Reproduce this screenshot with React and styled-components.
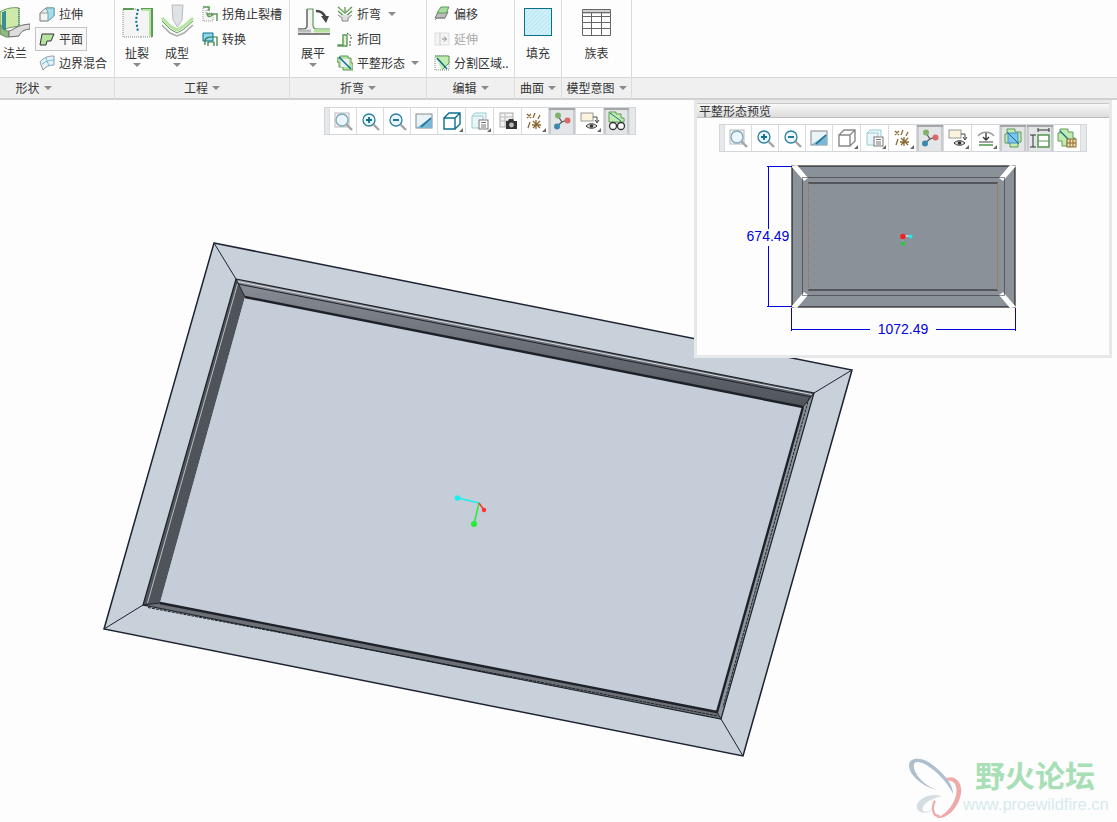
import React from "react";
import styled, { createGlobalStyle } from "styled-components";

const Global = createGlobalStyle`
  html, body { margin: 0; padding: 0; background: #fdfdfd; }
  body { font-family: "Noto Sans CJK SC", "Liberation Sans", sans-serif; font-size: 12px; color: #333; }
  #root { width: 1117px; height: 822px; overflow: hidden; }
`;

const Page = styled.div`
  width: 1117px; height: 822px; display: flex; flex-direction: column; overflow: hidden;
`;
const Ribbon = styled.header`display: flex; height: 100px; flex: none; background: #fdfdfd;`;
const Group = styled.section`
  display: flex; flex-direction: column; flex: ${p => (p.$w ? `0 0 ${p.$w}px` : "1 1 0")}; min-width: 0;
  border-right: ${p => (p.$w ? "1px solid #dcdcdc" : "0")}; box-sizing: border-box;
`;
const GroupBody = styled.div`
  height: 77px; display: flex; align-items: flex-start; padding-left: ${p => p.$pad || 0}px; box-sizing: border-box;
`;
const GroupFooter = styled.div`
  height: 23px; box-sizing: border-box; display: flex; align-items: center; justify-content: center; gap: 4px;
  padding-right: ${p => p.$pr || 0}px;
  background: #f0f0f0; border-top: 1px solid #d6d6d6; border-bottom: 2px solid #d0d0d0; line-height: 18px; color: #333;
`;
const Caret = styled.i`
  display: inline-block; width: 0; height: 0; flex: none;
  border-left: 4px solid transparent; border-right: 4px solid transparent; border-top: 4px solid #8a8a8a;
`;
const LargeButton = styled.button`
  appearance: none; border: 0; background: none; padding: 0; font: inherit; color: inherit; flex: none;
  width: ${p => p.$w}px; height: 77px; display: flex; flex-direction: column; align-items: center;
`;
const LargeIcon = styled.span`height: 44px; display: block; line-height: 0;`;
const LargeLabel = styled.span`height: 18px; line-height: 18px; white-space: nowrap;`;
const LargeCaret = styled(Caret)`margin-top: 1px;`;
const SmallColumn = styled.div`
  display: flex; flex-direction: column; padding-top: 2px; margin-left: ${p => p.$ml || 0}px;
`;
const SmallButton = styled.button`
  appearance: none; background: ${p => (p.$on ? "#f8f8f8" : "none")}; font: inherit;
  color: ${p => (p.$off ? "#a8a8a8" : "#333")};
  border: 1px solid ${p => (p.$on ? "#c4c4c4" : "transparent")};
  height: 24.5px; box-sizing: border-box; padding: 0 3px; display: flex; align-items: center; gap: 4px; white-space: nowrap;
  align-self: flex-start; line-height: 16px;
`;
const SmallCaret = styled(Caret)`margin-left: ${p => p.$ml}px;`;

const Canvas = styled.main`position: relative; flex: 1; background: #fdfdfd;`;
const ModelSvg = styled.svg`display: block; width: 1117px; height: 722px;`;
const ViewToolbar = styled.div`
  display: flex; height: 28px; box-sizing: border-box; background: #e6e8ea; border: 1px solid #d2d6da; padding: 0 5px 0 4px; gap: 0;
`;
const FloatingToolbar = styled(ViewToolbar)`position: absolute; left: 324px; top: 7px;`;
const ToolButton = styled.button`
  appearance: none; padding: 0; width: ${p => p.$w || 27}px; box-sizing: border-box; display: flex; align-items: center; justify-content: center;
  border: 0; border-left: 1px solid #d8dcdf;
  background: ${p => (p.$on ? "#e3e5e7" : "#fff")};
  box-shadow: ${p => (p.$on ? "inset 0 2px 0 #a4a6a8, inset 2px 0 0 #c8cacc, inset -2px 0 0 #c8cacc" : "none")};
  position: relative;
  &:last-child { border-right: 1px solid #d8dcdf; }
`;
const Corner = styled.i`
  position: absolute; right: 2px; bottom: 2px; width: 0; height: 0;
  border-left: 4px solid transparent; border-bottom: 4px solid #666;
`;
const Panel = styled.aside`
  position: absolute; left: 694px; top: 0; width: 418px; height: 258px; box-sizing: border-box;
  background: #e6e8ea; padding: 3px; display: flex; flex-direction: column;
`;
const PanelTitle = styled.h2`
  margin: 0; height: 15px; box-sizing: border-box; padding-left: 2px; font-weight: 400; font-size: 12px; line-height: 14px; color: #333;
  background: linear-gradient(#f8f8f8, #dcdcdc); border: 1px solid #c8c8c8; border-bottom-color: #bcbcbc; border-left: 0; border-right: 0;
`;
const PanelBody = styled.div`
  flex: 1; background: #fdfdfd; display: flex; flex-direction: column; align-items: center; padding-top: 6px;
`;
const PreviewSvg = styled.svg`display: block; width: 412px; height: 200px; margin-top: 3px; flex: none;`;
const Watermark = styled.div`
  position: absolute; left: 905px; top: 652px; width: 212px; height: 68px; display: flex; gap: 4px;
`;
const WatermarkText = styled.div`display: flex; flex-direction: column; align-items: flex-start; margin-left: -6px; padding-top: 6px;`;
const WatermarkTitle = styled.div`
  font: 700 30px/32px "Noto Sans CJK SC", sans-serif; color: #a8dfb6; padding-left: 12px; white-space: nowrap;
`;
const WatermarkUrl = styled.div`
  font: 16.500px/20px "Liberation Sans", sans-serif; color: #d6eaee; white-space: nowrap; margin-top: 4px;
`;

const G1 = "#b6e3a0", GD = "#5c9a58", T = "#0b6f8e";

const S = ({ children, w = 16, h = 16, vb }) => (
  <svg width={w} height={h} viewBox={vb || `0 0 ${w} ${h}`} style={{ display: "block", flex: "none" }}>{children}</svg>
);

/* ribbon icons — large ones use a 44px tall slot */
const FlangeIcon = () => (
  <S w={30} h={44}>
    <path d="M0 12 C6 8 14 7 19 8 L19 26 L8 28 L0 32Z" fill="#cfeaa8" stroke="#6a9a58" />
    <path d="M3 12V31 M5 11 V30" stroke="#0b6f8e" strokeWidth="1.5" />
    <path d="M19 8V26" stroke={T} strokeWidth="1" strokeDasharray="1 1" />
    <path d="M0 25 L0 34 L6 37 L9 37 L9 31 C4 31 2 29 1 25Z" fill="#8cb884" stroke="#6a8a60" />
    <path d="M9 31 C14 30 16 25 30 24 L30 29 C20 30 20 35 19 36 L9 37Z" fill="#ddd" stroke="#666" />
  </S>
);
const RipIcon = () => (
  <S w={40} h={44}>
    <rect x="6" y="9" width="29" height="28" fill="#f4f4f4" />
    <path d="M6 37V9H20 M24 37H6 M24 37H35" stroke="#888" strokeDasharray="1 1" fill="none" />
    <path d="M6 9H17M24 9H35V37" stroke={GD} strokeWidth="2" fill="none" />
    <path d="M25 10H33V36" stroke={G1} strokeWidth="2" fill="none" />
    <path d="M21 9 L19 20 L21 32" stroke={T} strokeWidth="2" strokeDasharray="2 2" fill="none" />
  </S>
);
const FormIcon = () => (
  <S w={40} h={44}>
    <path d="M15 5H26L25 20 L20.5 27 L16 20Z" fill="#dfe3e6" stroke="#b8bcc0" />
    <path d="M5 18L13 26 L20 30 L27 26 L36 18" fill="none" stroke={G1} strokeWidth="3" />
    <path d="M5 21L13 29 L20 33 L27 29 L36 21" fill="none" stroke={GD} strokeWidth="1" />
    <path d="M5 25L13 33 L20 36 L27 33 L36 25" fill="none" stroke="#aaa" strokeWidth="1.5" />
  </S>
);
const UnbendIcon = () => (
  <S w={40} h={44}>
    <path d="M14 9H20V25 C20 28 22 29 24 29H36V34H4V29H12 C13 29 14 28 14 26Z" fill="#f2f2f2" />
    <path d="M14 9V26 C14 29 12 29 5 29" fill="none" stroke="#666" strokeWidth="1.5" />
    <path d="M14 9H20 V25 C20 28 22 29 24 29H37" fill="none" stroke={GD} strokeWidth="1.2" />
    <path d="M5 34H37" stroke="#555" strokeWidth="1.5" />
    <path d="M5 31H18 " stroke="#bbb" strokeWidth="3" />
    <path d="M21 31H37" stroke={G1} strokeWidth="3" />
    <path d="M23 11 C28 11 31 14 32 17" fill="none" stroke="#444" strokeWidth="2.5" />
    <path d="M28 16L36 16 L33 23Z" fill="#444" />
  </S>
);
const FillIcon = () => (
  <S w={47} h={44}>
    <defs>
      <pattern id="hatch" width="3" height="3" patternUnits="userSpaceOnUse" patternTransform="rotate(45)">
        <rect width="3" height="3" fill="#bdeaf6" /><path d="M0 0V3" stroke="#fff" />
      </pattern>
    </defs>
    <rect x="9.5" y="8.5" width="27" height="27" fill="url(#hatch)" stroke={T} />
  </S>
);
const TableIcon = () => (
  <S w={69} h={44}>
    <path d="M20.5 9.5H48.5V35.5H20.5Z M20.5 12.5H48.5 M20.5 16.5H48.5 M20.5 22.5H48.5 M20.5 28.5H48.5 M29.5 12.5V35.5 M39.5 12.5V35.5" fill="#fff" stroke="#666" />
    <path d="M20 10H49V14H20Z" fill="#777" opacity=".35" />
  </S>
);
const ExtrudeIcon = () => (
  <S><path d="M1 7L7 2H15V10L9 15H1Z" fill="#f4f4f4" stroke="#777" /><path d="M7 2H15V10L9 15V7Z" fill="#a8dcec" stroke="#6aa" /><path d="M1 7H9" stroke="#999" /></S>
);
const PlanarIcon = () => (
  <S><path d="M3 3H15L12 10H8L7 14H1Z" fill={G1} stroke="#333" /></S>
);
const BlendIcon = () => (
  <S><path d="M1 7C5 2 10 1 15 1 L15 10 C10 10 6 12 4 15Z" fill="#e8f2f6" stroke="#8a9aa6" /><path d="M7 3L10 11M3 9C7 6 11 5 15 5" stroke="#6cc0e0" fill="none" /></S>
);
const ReliefIcon = () => (
  <S><path d="M1 1H7V4H4V7H11V15H1Z" fill="#f4f4f4" stroke="#999" strokeDasharray="1 1" /><path d="M1 1H7V5 M5 8H11 C10 10 8 11 6 10Z M11 8H15V15" stroke={GD} strokeWidth="1.5" fill="none" /></S>
);
const ConvertIcon = () => (
  <S><path d="M1 2H11V10H1Z" fill="#8fd8f0" stroke={T} /><path d="M3 14V10 C3 7 6 6 9 6H15V15M6 15V11H12V15" stroke="#2f7a3a" strokeWidth="1.2" fill="none" /></S>
);
const BendIcon = () => (
  <S><path d="M1 1L8 7L15 1M1 5L8 11L15 5" stroke={GD} fill="none" strokeWidth="1.4" /><path d="M3 2L8 6 L13 2" stroke={G1} fill="none" /><path d="M1 9L5 12V15H11V12L15 9" fill="#ddd" stroke="#888" /><path d="M8 1V6" stroke="#aaa" strokeWidth="2" /></S>
);
const BendBackIcon = () => (
  <S><path d="M1 14H6V4H10V15H1Z" fill="#dff0c8" stroke={GD} strokeWidth="1.4" /><path d="M10 2L14 5V8M13 10V15" stroke="#444" fill="none" strokeDasharray="2 1" /></S>
);
const FlatIcon = () => (
  <S><path d="M3 1H11V3H14V8H16V15H6V12H2V7H0V3H3Z" fill={G1} stroke={GD} /><rect x="4" y="4" width="8" height="8" fill="#eef" /><path d="M2 2L14 14" stroke={T} strokeWidth="1.5" /></S>
);
const OffsetIcon = () => (
  <S><path d="M1 12L4 6H14L11 12Z" fill="#bbb" stroke="#777" /><path d="M3 7L7 1H15L12 7Z" fill="#a8dca0" stroke={GD} /><path d="M1 14L3 12H11" stroke="#888" fill="none" /></S>
);
const ExtendIcon = () => (
  <S><rect x="1" y="2" width="14" height="12" fill="#f4f4f4" stroke="#ddd" /><path d="M8 8H12M10 5.5L12.5 8L10 10.5" stroke="#888" fill="none" /><path d="M6 2V14" stroke="#ccc" /></S>
);
const SplitIcon = () => (
  <S><rect x="1" y="1" width="14" height="14" fill="#fafafa" stroke="#888" strokeDasharray="1 1" /><path d="M1 1H15V8L8 15" fill="#c4ecb0" stroke={GD} /><path d="M3 3L13 14" stroke={T} strokeWidth="1.5" /></S>
);

/* view toolbar icons */
const Lens = ({ sign, c = "#2a7fa0" }) => (
  <>
    <circle cx="9" cy="9" r="6" fill="#eaf6fb" stroke={c} strokeWidth="1.3" />
    <path d="M13.500 13.500L19 19" stroke="#a4a4a4" strokeWidth="2.400" />
    {sign && <path d={sign === "+" ? "M6 9H12M9 6V12" : "M6 9H12"} stroke="#0b6f8e" strokeWidth="1.8" />}
  </>
);
const T1 = ({ children }) => <S w={20} h={20}>{children}</S>;
const Refit = () => <T1><rect x="2" y="2" width="14" height="14" fill="#f2f2f2" stroke="#bbb" /><Lens c="#7aa8bc" /></T1>;
const ZoomIn = () => <T1><Lens sign="+" /></T1>;
const ZoomOut = () => <T1><Lens sign="-" /></T1>;
const Repaint = () => <T1><rect x="2" y="3" width="16" height="14" fill="#e8f4f8" stroke="#888" /><path d="M2 17 L18 6V17Z" fill="#7ab8d4" /><path d="M7 16L17 7" stroke="#1a6f94" strokeWidth="1.6" /></T1>;
const Cube = ({ c = T }) => <T1><path d="M2 7H13V18H2Z M2 7L7 2H18V13L13 18 M13 7L18 2" fill="#fff" stroke={c} strokeWidth="1.4" /></T1>;
const Saved = () => <T1><path d="M2 5H13V17H2Z M2 5L5 2H16V8" fill="#eaf5fa" stroke="#9cc" /><rect x="9" y="9" width="9" height="9" fill="#fff" stroke="#777" /><path d="M11 11.500H16M11 14H16M11 16H16" stroke="#777" /></T1>;
const Camera = () => <T1><rect x="2" y="2" width="13" height="14" fill="#f2f2f2" stroke="#aaa" /><path d="M2 6H15M2 10H15M7 2V16" stroke="#bbb" /><path d="M8 10H10L11 8H15L16 10H19V18H8Z" fill="#333" /><circle cx="13.500" cy="14" r="2.400" fill="#bbb" /></T1>;
const Datum = () => <T1><path d="M2 3L6 7M6 3L2 7M10 2L8 7M5 11L3 17M11 9V18M7 14H16M8 10L15 17M15 10L8 17M15 4L13 8" stroke="#8a6a30" strokeWidth="1.3" /></T1>;
const Csys = () => <T1><path d="M6 5L10 11L15 9M10 11L5 15" stroke="#555" strokeWidth="1.2" fill="none" /><circle cx="6" cy="4.500" r="3" fill="#7fb26a" /><circle cx="15.500" cy="9.500" r="3" fill="#d86a6a" /><circle cx="5" cy="15.500" r="3" fill="#3a8ab0" /></T1>;
const Display = () => <T1><rect x="1" y="2" width="12" height="8" fill="#fbf3dc" stroke="#999" /><path d="M13 6H17V11M15 9L17 12 19 9" stroke="#444" fill="none" /><path d="M6 15C9 12 14 12 17 15 C14 18 9 18 6 15Z" fill="#ddd" stroke="#333" /><circle cx="11.500" cy="15" r="1.800" fill="#333" /></T1>;
const Glasses = () => <T1><path d="M2 1H9V3H14V7H17V11H2Z" fill="#c4ecb0" stroke={GD} /><path d="M3 2L14 10" stroke={T} /><circle cx="6" cy="15" r="3.500" fill="#fff" stroke="#333" strokeWidth="1.3" /><circle cx="14" cy="15" r="3.500" fill="#fff" stroke="#333" strokeWidth="1.3" /><path d="M9.500 14.500H10.500" stroke="#333" /></T1>;
const FlatMode = () => <T1><path d="M2 8 C6 3 14 3 18 8" stroke="#999" fill="none" strokeWidth="1.3" /><path d="M10 5V11M7 9L10 12 13 9" stroke="#333" fill="none" strokeWidth="1.3" /><path d="M3 14H17" stroke="#777" strokeWidth="1.4" /><path d="M3 17H17" stroke={GD} strokeWidth="1.6" /></T1>;
const BlueFlat = () => <T1><path d="M4 1H12V4H18V14H15V19H7V15H2V6H4Z" fill="#c4ecb0" stroke={GD} /><rect x="5" y="5" width="10" height="10" fill="#7cc4ee" stroke="#4a90c0" /><path d="M4 4L16 16" stroke={T} /></T1>;
const DimMode = () => <T1><path d="M8 2H19M8 0V4M19 0V4" stroke="#333" /><path d="M0 7H6M0 19H6M3 7V19" stroke="#333" /><rect x="8" y="7" width="11" height="12" fill="#fff" stroke={GD} strokeWidth="1.6" /><path d="M8 13H19" stroke={GD} /></T1>;
const FlatTable = () => <T1><path d="M3 1H11V4H16V10H18V12H10V18H5V13H1V5H3Z" fill="#c4ecb0" stroke={GD} /><path d="M3 3L11 11" stroke={T} strokeWidth="1.2" /><rect x="10" y="11" width="9" height="8" fill="#f0dcb0" stroke="#8a6a30" /><path d="M10 15H19M13 11V19M16 11V19" stroke="#8a6a30" /></T1>;

const Tool = ({ w, on, corner, children }) => (
  <ToolButton $w={w} $on={on}>{children}{corner && <Corner />}</ToolButton>
);

const LARGE = (Icon, label, w, caret) => (
  <LargeButton $w={w}>
    <LargeIcon><Icon /></LargeIcon>
    <LargeLabel>{label}</LargeLabel>
    {caret && <LargeCaret />}
  </LargeButton>
);
const Small = ({ icon: Icon, children, on, off, caret }) => (
  <SmallButton $on={on} $off={off}><Icon />{children}{caret && <SmallCaret $ml={caret} />}</SmallButton>
);
const Footer = ({ children, pr }) => <GroupFooter $pr={pr}><span>{children}</span><Caret /></GroupFooter>;

const Model = () => (
  <ModelSvg viewBox="0 100 1117 722">
    <defs>
      <linearGradient id="wallTop" x1="0.52" y1="0" x2="0.48" y2="1">
        <stop offset="0" stopColor="#8a9097" /><stop offset="1" stopColor="#4e535a" />
      </linearGradient>
    </defs>
    <polygon points="214,243 852,370 743,756 104,629" fill="#c8d0da" stroke="#1c2230" strokeWidth="1.5" />
    <g stroke="#1c2230" strokeWidth="1" fill="none">
      <path d="M214 243L236 279M852 370L814 393M743 756L721 719M104 629L143 605" />
    </g>
    <polygon points="236,279 814,393 803,407 245,297" fill="url(#wallTop)" />
    <polygon points="236,279 245,297 160,603 143,605" fill="#4f545a" />
    <polygon points="143,605 160,603 717,712 721,719" fill="#6c7178" />
    <polygon points="717,712 803,407 814,393 721,719" fill="#8d939b" />
    <polygon points="245,297 803,407 717,712 160,603" fill="#c5cdd9" />
    <path d="M245 297L803 407M803 407L717 712L160 603" fill="none" stroke="#1e2228" strokeWidth="2.400" />
    <path d="M236 279L814 393L721 719L143 605Z" fill="none" stroke="#1e2228" strokeWidth="1.200" />
    <path d="M238 281.500L812 394.500" fill="none" stroke="#d8dce2" strokeWidth="1" />
    <path d="M238 284L811 397" fill="none" stroke="#1e2228" strokeWidth="1" />
    <path d="M237.500 284L147.500 603" fill="none" stroke="#b8bec6" strokeWidth="1" />
    <path d="M148 607.500L718 716M809 398L723 707" fill="none" stroke="#1e2228" strokeWidth="1" strokeDasharray="3 1" />
    <path d="M236 279L245 297M814 393L803 407M143 605L160 603M721 719L717 712" stroke="#1e2228" strokeWidth="1" />
    <g strokeWidth="1.500" fill="none">
      <path d="M479 503L458 498" stroke="#18f0f0" />
      <path d="M479 503L474 524" stroke="#22ee33" />
      <path d="M479 503L484 510" stroke="#ff3333" />
    </g>
    <circle cx="457.500" cy="498" r="2.800" fill="#18f0f0" />
    <circle cx="474" cy="524" r="3" fill="#22ee33" />
    <circle cx="484" cy="510" r="2.200" fill="#ff3333" />
  </ModelSvg>
);

const Preview = () => (
  <PreviewSvg viewBox="697 155 412 200">
    <rect x="792" y="166" width="223" height="141" fill="#8a9199" stroke="#222" strokeWidth="1.200" />
    <path d="M791 166L797 165L808 178L804 181Z M1016 166L1010 165L999 178L1003 181Z M791 307L797 308L808 295L804 292Z M1016 307L1010 308L999 295L1003 292Z" fill="#fff" />
    <path d="M808 183H998M808 290H998" stroke="#1c1c1c" strokeWidth="1.200" />
    <path d="M808.500 183V290M997.500 183V290" stroke="#b06a20" strokeWidth="1" strokeDasharray="1 1" />
    <rect x="802.500" y="177.500" width="202" height="118" fill="none" stroke="#222" strokeDasharray="1 1" />
    <g stroke="#0000e0" strokeWidth="1" fill="none">
      <path d="M767 166.500H792M767 306.500H792M768.500 167V229M768.500 246V306" />
      <path d="M791.500 308V331M1015.500 308V331M792 329.500H870M936 329.500H1015" strokeWidth="1" />
    </g>
    <text x="768" y="241" fontFamily="Liberation Sans" fontSize="14" fill="#0000e0" textAnchor="middle">674.49</text>
    <text x="903" y="334" fontFamily="Liberation Sans" fontSize="14" fill="#0000e0" textAnchor="middle">1072.49</text>
    <path d="M903 236H911" stroke="#fff" /><path d="M903 236V243" stroke="#aaa" />
    <circle cx="903" cy="236.500" r="2.700" fill="#f02020" />
    <circle cx="910.500" cy="236.500" r="2" fill="#20e8f0" />
    <circle cx="903" cy="243.500" r="2" fill="#20d030" />
  </PreviewSvg>
);

const Butterfly = () => (
  <svg width="60" height="68" viewBox="0 0 52 60" style={{ flex: "none" }}>
    <path d="M3 12 C3 5 13 4 22 10 C33 18 42 28 42 37 C36 24 20 10 12 9 C7 8 6 12 9 18 C12 25 22 32 29 34 C20 32 4 24 3 12Z" fill="#aebfce" />
    <path d="M36 23 C44 20 50 27 49 36 C47 50 36 60 27 58 C36 56 45 44 45 34 C45 28 42 25 36 25Z" fill="#eeaaaa" />
    <path d="M30 56 C25 58 22 50 26 43 " fill="none" stroke="#eeaaaa" strokeWidth="2" />
    <path d="M10 47 C12 40 24 36 32 39 C26 40 16 44 15 50 C15 54 19 53 24 50 C19 56 9 54 10 47Z" fill="#d6dde2" />
  </svg>
);

export default function App() {
  return (
    <Page>
      <Global />
      <Ribbon>
        <Group $w={115}>
          <GroupBody>
            {LARGE(FlangeIcon, "法兰", 30)}
            <SmallColumn $ml={5}>
              <Small icon={ExtrudeIcon}>拉伸</Small>
              <Small icon={PlanarIcon} on>平面</Small>
              <Small icon={BlendIcon}>边界混合</Small>
            </SmallColumn>
          </GroupBody>
          <Footer pr={47}>形状</Footer>
        </Group>
        <Group $w={175}>
          <GroupBody $pad={2}>
            {LARGE(RipIcon, "扯裂", 40, true)}
            {LARGE(FormIcon, "成型", 40, true)}
            <SmallColumn $ml={1}>
              <Small icon={ReliefIcon}>拐角止裂槽</Small>
              <Small icon={ConvertIcon}>转换</Small>
            </SmallColumn>
          </GroupBody>
          <Footer>工程</Footer>
        </Group>
        <Group $w={137}>
          <GroupBody $pad={3}>
            {LARGE(UnbendIcon, "展平", 40, true)}
            <SmallColumn>
              <Small icon={BendIcon} caret={3}>折弯</Small>
              <Small icon={BendBackIcon}>折回</Small>
              <Small icon={FlatIcon} caret={2}>平整形态</Small>
            </SmallColumn>
          </GroupBody>
          <Footer>折弯</Footer>
        </Group>
        <Group $w={88}>
          <GroupBody $pad={3}>
            <SmallColumn>
              <Small icon={OffsetIcon}>偏移</Small>
              <Small icon={ExtendIcon} off>延伸</Small>
              <Small icon={SplitIcon}>分割区域..</Small>
            </SmallColumn>
          </GroupBody>
          <Footer>编辑</Footer>
        </Group>
        <Group $w={47}>
          <GroupBody>{LARGE(FillIcon, "填充", 46)}</GroupBody>
          <Footer>曲面</Footer>
        </Group>
        <Group $w={70}>
          <GroupBody>{LARGE(TableIcon, "族表", 69)}</GroupBody>
          <Footer>模型意图</Footer>
        </Group>
        <Group>
          <GroupBody />
          <GroupFooter />
        </Group>
      </Ribbon>
      <Canvas>
        <Model />
        <FloatingToolbar>
          <Tool><Refit /></Tool>
          <Tool><ZoomIn /></Tool>
          <Tool><ZoomOut /></Tool>
          <Tool><Repaint /></Tool>
          <Tool w={28} corner><Cube /></Tool>
          <Tool w={28} corner><Saved /></Tool>
          <Tool w={28}><Camera /></Tool>
          <Tool corner><Datum /></Tool>
          <Tool on><Csys /></Tool>
          <Tool w={28} corner><Display /></Tool>
          <Tool on><Glasses /></Tool>
        </FloatingToolbar>
        <Panel>
          <PanelTitle>平整形态预览</PanelTitle>
          <PanelBody>
            <ViewToolbar>
              <Tool><Refit /></Tool>
              <Tool><ZoomIn /></Tool>
              <Tool><ZoomOut /></Tool>
              <Tool><Repaint /></Tool>
              <Tool w={28} corner><Cube c="#888" /></Tool>
              <Tool w={28} corner><Saved /></Tool>
              <Tool w={28} corner><Datum /></Tool>
              <Tool on><Csys /></Tool>
              <Tool w={28} corner><Display /></Tool>
              <Tool w={28} corner><FlatMode /></Tool>
              <Tool on><BlueFlat /></Tool>
              <Tool on><DimMode /></Tool>
              <Tool w={28}><FlatTable /></Tool>
            </ViewToolbar>
            <Preview />
          </PanelBody>
        </Panel>
        <Watermark>
          <Butterfly />
          <WatermarkText>
            <WatermarkTitle>野火论坛</WatermarkTitle>
            <WatermarkUrl>www.proewildfire.cn</WatermarkUrl>
          </WatermarkText>
        </Watermark>
      </Canvas>
    </Page>
  );
}
